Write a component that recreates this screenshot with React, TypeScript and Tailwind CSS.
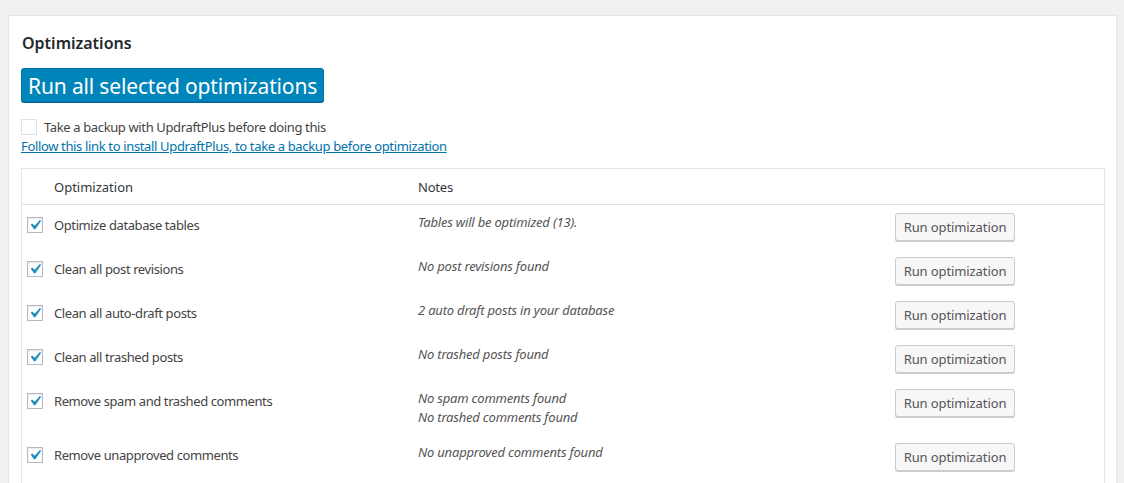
import React from "react";

const rows: { label: string; notes: string[] }[] = [
  { label: "Optimize database tables", notes: ["Tables will be optimized (13)."] },
  { label: "Clean all post revisions", notes: ["No post revisions found"] },
  { label: "Clean all auto-draft posts", notes: ["2 auto draft posts in your database"] },
  { label: "Clean all trashed posts", notes: ["No trashed posts found"] },
  { label: "Remove spam and trashed comments", notes: ["No spam comments found", "No trashed comments found"] },
  { label: "Remove unapproved comments", notes: ["No unapproved comments found"] },
];

function Check() {
  return (
    <div className="w-4 h-4 border border-[#b4b9be] bg-white shadow-[inset_0_1px_2px_rgba(0,0,0,0.1)] flex items-center justify-center shrink-0 overflow-visible">
      <svg width="20" height="20" viewBox="0 0 20 20" className="shrink-0 -ml-[1px]">
        <path d="M14.83 4.89l1.34.94-5.81 8.38H9.02L5.78 9.67l1.34-1.25 2.57 2.4z" fill="#1e8cbe" />
      </svg>
    </div>
  );
}

export default function App() {
  return (
    <div
      className="h-[483px] overflow-hidden bg-[#f1f1f1] pl-[8px] pr-[7px] pt-[15px] text-[13px] text-[#444]"
      style={{ fontFamily: '"Noto Sans", "Open Sans", sans-serif' }}
    >
      <div className="bg-white border border-[#e5e5e5] pl-[12px] pr-[11px] pb-4">
        <h2 className="text-[16px] font-semibold text-[#23282d] pl-[1px] pt-[16px] leading-[22px]">Optimizations</h2>
        <button className="mt-[14px] h-[34px] px-[6px] pt-[2px] bg-[#0085ba] border border-[#0073aa] rounded-[3px] text-white text-[21px] leading-[28px] tracking-[-0.15px] shadow-[0_1px_0_#006799]">
          Run all selected optimizations
        </button>
        <div className="mt-[16px] flex items-center h-[18px]">
          <div className="w-4 h-4 border border-[#e1e1e1] bg-white shrink-0" />
          <span className="ml-[7px] text-[13px] leading-[18px] tracking-[-0.37px] text-[#444]">Take a backup with UpdraftPlus before doing this</span>
        </div>
        <a href="#" className="block text-[#0073aa] underline leading-[20px] tracking-[-0.35px]">
          Follow this link to install UpdraftPlus, to take a backup before optimization
        </a>
        <div className="mt-[12px] border border-[#e5e5e5] pb-[20px]">
          <div className="flex h-[36px] border-b border-[#e1e1e1] items-center pt-[2px] text-[#32373c]">
            <div className="w-[32px]" />
            <div className="w-[364px]">Optimization</div>
            <div className="tracking-[-0.2px]">Notes</div>
          </div>
          {rows.map((r) => (
            <div key={r.label} className="flex items-start pb-[8px]">
              <div className="w-[32px] pl-[5px] pt-[12px] shrink-0">
                <Check />
              </div>
              <div className="w-[364px] pt-[10px] leading-[20px] shrink-0 text-[#444] tracking-[-0.4px]">{r.label}</div>
              <div className="w-[477px] pt-[8px] shrink-0 italic text-[#555] leading-[19px] tracking-[-0.2px]">
                {r.notes.map((n) => (
                  <div key={n}>{n}</div>
                ))}
              </div>
              <div className="pt-[8px]">
                <button className="h-[28px] w-[120px] bg-[#f7f7f7] border border-[#cccccc] rounded-[3px] shadow-[0_1px_0_#cccccc] text-[#555] text-[13px] leading-[26px] tracking-[-0.1px]">
                  Run optimization
                </button>
              </div>
            </div>
          ))}
        </div>
      </div>
    </div>
  );
}
